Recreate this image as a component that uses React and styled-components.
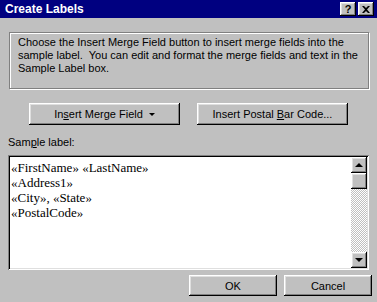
import * as React from "react"
import styled, { createGlobalStyle } from "styled-components";

const GlobalStyle = createGlobalStyle`
*, *::before, *::after {
    box-sizing: border-box;
}
body {
    margin: 0;
    background: #c0c0c0;
    font-family: "Liberation Sans", Arial, sans-serif;
}
`

const raised = `
    box-shadow: inset -1px -1px #000, inset 1px 1px #fff, inset -2px -2px #808080, inset 2px 2px #dfdfdf;
`

const Dialog = styled.div`
width: 377px;
height: 302px;
background: #c0c0c0;
display: flex;
flex-direction: column;
font-size: 11px;
color: #000;
`

const TitleBar = styled.div`
height: 18px;
flex: none;
background: #000080;
display: flex;
align-items: center;
justify-content: space-between;
padding: 0 3px 0 5px;
color: #fff;
font-weight: bold;
font-size: 12px;
`

const TitleButtons = styled.div`
display: flex;
gap: 2px;
`

const TitleButton = styled.div`
width: 16px;
height: 14px;
background: #c0c0c0;
${raised}
display: flex;
align-items: center;
justify-content: center;
color: #000;
font-size: 11px;
font-weight: bold;
`

const GroupBox = styled.div`
margin: 14px 8px 0 9px;
height: 57px;
flex: none;
border: 1px solid #808080;
box-shadow: inset 1px 1px #fff, 1px 1px #fff;
padding: 3px 8px 0 8px;
line-height: 13px;
`

const ButtonRow = styled.div`
display: flex;
gap: 17px;
margin: 14px 0 0 29px;
`

const Button = styled.button`
width: ${p => p.$w}px;
height: ${p => p.$h}px;
flex: none;
background: #c0c0c0;
border: none;
${raised}
font-family: "Liberation Sans", Arial, sans-serif;
font-size: 11px;
color: #000;
padding: 0;
display: flex;
align-items: center;
justify-content: center;
gap: 6px;
`

const Caret = styled.span`
width: 0;
height: 0;
border-left: 3px solid transparent;
border-right: 3px solid transparent;
border-top: 3px solid #000;
`

const FieldLabel = styled.div`
margin: 11px 0 0 8px;
height: 19px;
line-height: 13px;
`

const TextBox = styled.div`
margin-left: 8px;
width: 361px;
height: 115px;
flex: none;
background: #fff;
box-shadow: inset 1px 1px #808080, inset -1px -1px #fff, inset 2px 2px #000, inset -2px -2px #dfdfdf;
padding: 2px;
display: flex;
`

const Lines = styled.div`
flex: 1;
padding: 3px 0 0 1px;
font-family: "Liberation Serif", "Times New Roman", serif;
font-size: 13px;
line-height: 15px;
`

const ScrollBar = styled.div`
width: 16px;
display: flex;
flex-direction: column;
`

const ScrollButton = styled.div`
height: 16px;
flex: none;
background: #c0c0c0;
${raised}
display: flex;
align-items: center;
justify-content: center;
`

const Arrow = styled.span`
width: 0;
height: 0;
border-left: 4px solid transparent;
border-right: 4px solid transparent;
${p => p.$up ? "border-bottom: 4px solid #000;" : "border-top: 4px solid #000;"}
`

const Track = styled.div`
flex: 1;
background-image: conic-gradient(#c0c0c0 90deg, #fff 90deg 180deg, #c0c0c0 180deg 270deg, #fff 270deg);
background-size: 2px 2px;
`

const Footer = styled.div`
display: flex;
justify-content: flex-end;
gap: 7px;
margin: 5px 5px 0 0;
`

const App = () => {
    return (
        <>
            <GlobalStyle />
            <Dialog>
                <TitleBar>
                    <span>Create Labels</span>
                    <TitleButtons>
                        <TitleButton>?</TitleButton>
                        <TitleButton>
                            <svg width="8" height="7" viewBox="0 0 8 7">
                                <path d="M0 0h2l2 2 2-2h2L5 3.5 8 7H6L4 5 2 7H0l3-3.5z" fill="#000" />
                            </svg>
                        </TitleButton>
                    </TitleButtons>
                </TitleBar>
                <GroupBox>
                    Choose the Insert Merge Field button to insert merge fields into the sample label.&nbsp; You can edit and format the merge fields and text in the Sample Label box.
                </GroupBox>
                <ButtonRow>
                    <Button $w={151} $h={22}>
                        <span>In<u>s</u>ert Merge Field</span>
                        <Caret />
                    </Button>
                    <Button $w={151} $h={22}>
                        <span>Insert Postal <u>B</u>ar Code...</span>
                    </Button>
                </ButtonRow>
                <FieldLabel>Sam<u>p</u>le label:</FieldLabel>
                <TextBox>
                    <Lines>
                        <div>«FirstName» «LastName»</div>
                        <div>«Address1»</div>
                        <div>«City», «State»</div>
                        <div>«PostalCode»</div>
                    </Lines>
                    <ScrollBar>
                        <ScrollButton><Arrow $up /></ScrollButton>
                        <ScrollButton />
                        <Track />
                        <ScrollButton><Arrow /></ScrollButton>
                    </ScrollBar>
                </TextBox>
                <Footer>
                    <Button $w={88} $h={21}>OK</Button>
                    <Button $w={88} $h={21}>Cancel</Button>
                </Footer>
            </Dialog>
        </>
    )
}

export default App
